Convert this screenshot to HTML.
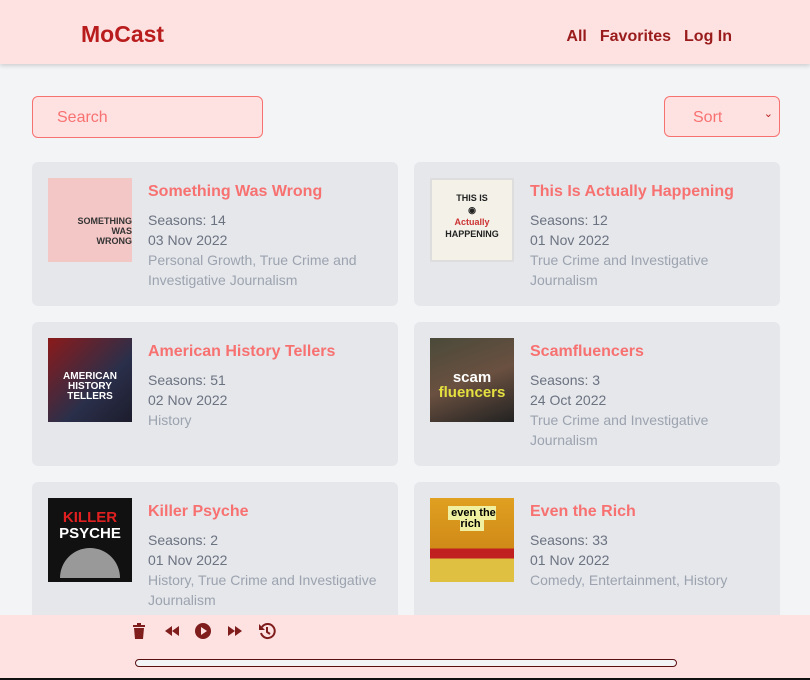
<!DOCTYPE html>
<html><head><style>
*{box-sizing:border-box;margin:0;padding:0}
body{width:810px;height:680px;background:#f3f4f6;font-family:"Liberation Sans",sans-serif;position:relative;overflow:hidden}
header{position:absolute;top:0;left:0;width:810px;height:64px;background:#fee2e2;box-shadow:0 2px 4px rgba(0,0,0,.15);z-index:2}
.logo{position:absolute;left:81px;top:21px;font-size:23px;font-weight:bold;color:#b91c1c}
nav{position:absolute;right:78px;top:28px;font-size:16px;font-weight:bold;color:#991b1b}
nav span{margin-left:13px}
.search{position:absolute;left:32px;top:96px;width:231px;height:42px;border:1px solid #f87171;border-radius:6px;background:#fee2e2;color:#f87171;font-size:16px;padding:12px 24px}
.sort{position:absolute;left:664px;top:96px;width:116px;height:41px;border:1px solid #f87171;border-radius:6px;background:#fee2e2;color:#f87171;font-size:16px;padding:12px 28px}
.sort i{position:absolute;right:6px;top:10px;font-style:normal;font-size:11px;color:#b91c1c}
.card{position:absolute;width:366px;height:144px;background:#e5e7eb;border-radius:6px}
.img{position:absolute;left:16px;top:16px;width:84px;height:84px}
.t{position:absolute;left:116px;top:21px;font-size:16px;font-weight:bold;color:#f87171}
.d{position:absolute;left:116px;top:48px;font-size:14px;line-height:20px;color:#6b7280}
.d .g{color:#9ca3af}
footer{position:absolute;left:0;top:615px;width:810px;height:65px;background:#fee2e2;border-bottom:2px solid #111;z-index:2}
.bar{position:absolute;left:135px;top:44px;width:542px;height:8px;border:1.5px solid #5a1010;border-radius:4px;background:#f3f4f6}
.ic{position:absolute;top:7px}
</style></head><body>
<header><div class="logo">MoCast</div><nav><span>All</span><span>Favorites</span><span>Log In</span></nav></header>
<div class="search">Search</div>
<div class="sort">Sort<i>⌄</i></div>

<div class="card" style="left:32px;top:162px"><div class="img" style="background:#f4c7c7;font-size:9px;font-weight:bold;color:#333;text-align:right;padding-top:38px;line-height:10px">SOMETHING<br>WAS<br>WRONG</div><div class="t">Something Was Wrong</div><div class="d">Seasons: 14<br>03 Nov 2022<br><span class="g">Personal Growth, True Crime and<br>Investigative Journalism</span></div></div>
<div class="card" style="left:414px;top:162px"><div class="img" style="background:#f3f1e8;border:2px solid #ddd;text-align:center;font-size:9px;font-weight:bold;color:#222;padding-top:12px;line-height:12px">THIS IS<br>◉<br><span style="color:#c33">Actually</span><br>HAPPENING</div><div class="t">This Is Actually Happening</div><div class="d">Seasons: 12<br>01 Nov 2022<br><span class="g">True Crime and Investigative<br>Journalism</span></div></div>

<div class="card" style="left:32px;top:322px"><div class="img" style="background:linear-gradient(135deg,#8b1a1a,#2a2f4a 60%,#1c1c2c);color:#fff;font-size:10px;font-weight:bold;text-align:center;padding-top:34px;line-height:10px">AMERICAN<br>HISTORY<br>TELLERS</div><div class="t">American History Tellers</div><div class="d">Seasons: 51<br>02 Nov 2022<br><span class="g">History</span></div></div>
<div class="card" style="left:414px;top:322px"><div class="img" style="background:linear-gradient(160deg,#4a4a3a,#6a5040 50%,#222);color:#fff;font-size:15px;font-weight:bold;text-align:center;padding-top:32px;line-height:15px">scam<br><span style="color:#e4e040">fluencers</span></div><div class="t">Scamfluencers</div><div class="d">Seasons: 3<br>24 Oct 2022<br><span class="g">True Crime and Investigative<br>Journalism</span></div></div>

<div class="card" style="left:32px;top:482px"><div class="img" style="background:#111;color:#fff;font-size:15px;font-weight:bold;text-align:center;padding-top:12px;line-height:16px"><span style="color:#e02020">KILLER</span><br>PSYCHE<div style="margin:6px auto 0;width:60px;height:30px;border-radius:30px 30px 0 0;background:#999"></div></div><div class="t">Killer Psyche</div><div class="d">Seasons: 2<br>01 Nov 2022<br><span class="g">History, True Crime and Investigative<br>Journalism</span></div></div>
<div class="card" style="left:414px;top:482px"><div class="img" style="background:linear-gradient(#e0a020,#d08a18 60%,#c02020 60%,#c02020 72%,#e0c040 72%);font-size:11px;font-weight:bold;text-align:center;padding-top:10px;line-height:11px"><span style="background:#f0f0a0;padding:1px 3px">even the<br>rich</span></div><div class="t">Even the Rich</div><div class="d">Seasons: 33<br>01 Nov 2022<br><span class="g">Comedy, Entertainment, History</span></div></div>

<footer>
<svg class="ic" style="left:131px" width="16" height="18" viewBox="0 0 16 18"><path d="M2 3h12v2H2zM6 1h4v2H6zM3 6h10l-1 11H4z" fill="#7f1d1d"/></svg>
<svg class="ic" style="left:163px" width="18" height="18" viewBox="0 0 18 18"><path d="M9 4v10L2 9zM16 4v10L9 9z" fill="#7f1d1d"/></svg>
<svg class="ic" style="left:194px" width="18" height="18" viewBox="0 0 18 18"><circle cx="9" cy="9" r="8" fill="#7f1d1d"/><path d="M7 5v8l6-4z" fill="#fee2e2"/></svg>
<svg class="ic" style="left:226px" width="18" height="18" viewBox="0 0 18 18"><path d="M2 4v10l7-5zM9 4v10l7-5z" fill="#7f1d1d"/></svg>
<svg class="ic" style="left:258px" width="18" height="18" viewBox="0 0 18 18"><path d="M4 5A7 7 0 1 1 3 11" stroke="#7f1d1d" stroke-width="2" fill="none"/><path d="M1 2v6h6z" fill="#7f1d1d"/><path d="M9 5v5l3 2" stroke="#7f1d1d" stroke-width="2" fill="none"/></svg>
<div class="bar"></div>
</footer>
</body></html>
